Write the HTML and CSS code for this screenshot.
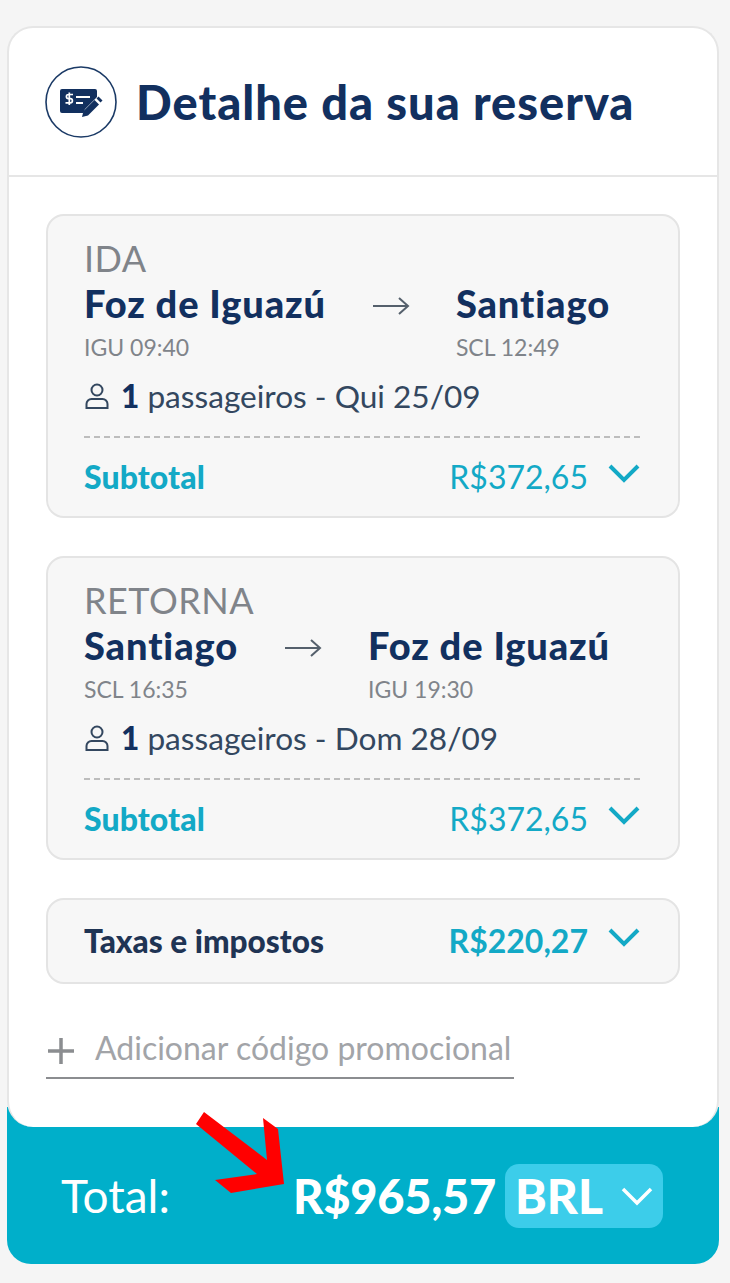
FILE: index.html
```html
<!DOCTYPE html>
<html lang="pt">
<head>
<meta charset="utf-8">
<title>Detalhe da sua reserva</title>
<link rel="stylesheet" href="styles.css">
</head>
<body>
<main class="booking">
  <div class="sheet">
    <header class="head">
      <span class="head-icon">
        <svg width="72" height="72" viewBox="0 0 72 72">
          <circle cx="36" cy="36" r="35" fill="none" stroke="#1b3a66" stroke-width="1.6"/>
          <path d="M15 25a2 2 0 0 1 2-2H50a2 2 0 0 1 2 2v6L40 43l-1.500 4H17a2 2 0 0 1-2-2z" fill="#12305f"/>
          <path d="M37 51l1.500-6 11-11 4.500 4.500-11 11z" fill="#12305f"/>
          <path d="M51.500 32.500l2-2 4 4-2 2z" fill="#12305f"/>
          <path d="M28 28.500h-4.500a2 2 0 0 0 0 4.200h1.800a2 2 0 0 1 0 4.200H20.500M24.300 26.500v12.500" fill="none" stroke="#fff" stroke-width="1.700"/>
          <path d="M31 31h14M31 37h7" fill="none" stroke="#fff" stroke-width="2"/>
        </svg>
      </span>
      <h1 class="title">Detalhe da sua reserva</h1>
    </header>
    <div class="body">
      <section class="leg">
        <div class="leg-kind">IDA</div>
        <div class="route">
          <div class="stop">
            <div class="city">Foz de Iguazú</div>
            <div class="code">IGU 09:40</div>
          </div>
          <svg class="arrow" width="38" height="22" viewBox="0 0 38 22"><path d="M1 11h35M27 3l9 8-9 8" fill="none" stroke="#55606c" stroke-width="2"/></svg>
          <div class="stop">
            <div class="city">Santiago</div>
            <div class="code">SCL 12:49</div>
          </div>
        </div>
        <div class="pax">
          <svg width="26" height="28" viewBox="0 0 26 28"><circle cx="13" cy="8" r="5.500" fill="none" stroke="#33475f" stroke-width="2"/><path d="M2.500 26v-4a5 5 0 0 1 5-5h11a5 5 0 0 1 5 5v4z" fill="none" stroke="#33475f" stroke-width="2"/></svg>
          <span><b class="pax-n">1</b> passageiros - Qui 25/09</span>
        </div>
        <div class="sub">
          <span class="sub-label">Subtotal</span>
          <span class="sub-price">R$372,65
            <svg class="chev" width="32" height="20" viewBox="0 0 32 20"><path d="M2 2l14 14L30 2" fill="none" stroke="#13a9c6" stroke-width="4"/></svg>
          </span>
        </div>
      </section>

      <section class="leg">
        <div class="leg-kind">RETORNA</div>
        <div class="route">
          <div class="stop">
            <div class="city">Santiago</div>
            <div class="code">SCL 16:35</div>
          </div>
          <svg class="arrow" width="38" height="22" viewBox="0 0 38 22"><path d="M1 11h35M27 3l9 8-9 8" fill="none" stroke="#55606c" stroke-width="2"/></svg>
          <div class="stop">
            <div class="city">Foz de Iguazú</div>
            <div class="code">IGU 19:30</div>
          </div>
        </div>
        <div class="pax">
          <svg width="26" height="28" viewBox="0 0 26 28"><circle cx="13" cy="8" r="5.500" fill="none" stroke="#33475f" stroke-width="2"/><path d="M2.500 26v-4a5 5 0 0 1 5-5h11a5 5 0 0 1 5 5v4z" fill="none" stroke="#33475f" stroke-width="2"/></svg>
          <span><b class="pax-n">1</b> passageiros - Dom 28/09</span>
        </div>
        <div class="sub">
          <span class="sub-label">Subtotal</span>
          <span class="sub-price">R$372,65
            <svg class="chev" width="32" height="20" viewBox="0 0 32 20"><path d="M2 2l14 14L30 2" fill="none" stroke="#13a9c6" stroke-width="4"/></svg>
          </span>
        </div>
      </section>

      <section class="tax">
        <span class="tax-label">Taxas e impostos</span>
        <span class="tax-price">R$220,27
          <svg class="chev" width="32" height="20" viewBox="0 0 32 20"><path d="M2 2l14 14L30 2" fill="none" stroke="#13a9c6" stroke-width="4"/></svg>
        </span>
      </section>

      <div class="promo">
        <svg width="30" height="30" viewBox="0 0 30 30"><path d="M15 2v26M2 15h26" fill="none" stroke="#8b8d90" stroke-width="3.500"/></svg>
        <span>Adicionar código promocional</span>
      </div>
    </div>
  </div>
  <footer class="total">
    <span class="total-label">Total:</span>
    <div class="total-right">
      <span class="total-value">R$965,57</span>
      <span class="currency">BRL
        <svg width="32" height="20" viewBox="0 0 32 20"><path d="M2 3l14 14L30 3" fill="none" stroke="#fff" stroke-width="3.500"/></svg>
      </span>
    </div>
  </footer>
  <svg class="pointer" width="92" height="84" viewBox="0 0 92 84"><path d="M1 14L9 2 72 50 68 8 83 19 89 74 36 83 20 70 62 64z" fill="#ff0000"/></svg>
</main>
</body>
</html>
```

FILE: styles.css
```css
* {
  box-sizing: border-box;
}

html, body {
  margin: 0;
  padding: 0;
}

body {
  background: #f5f5f5;
  font-family: "Lato", "Liberation Sans", sans-serif;
  color: #12305f;
  width: 730px;
  height: 1283px;
  overflow: hidden;
}

.booking {
  position: relative;
  width: 712px;
  margin: 26px 0 0 7px;
}

.sheet {
  position: relative;
  z-index: 1;
  background: #fff;
  border: 2px solid #e6e6e6;
  border-bottom: 0;
  border-radius: 26px;
  height: 1101px;
}

.head {
  display: flex;
  align-items: center;
  gap: 19px;
  height: 149px;
  padding: 0 0 0 36px;
  border-bottom: 2px solid #e6e6e6;
}

.head-icon {
  display: flex;
}

.title {
  margin: 0;
  font-size: 47px;
  font-weight: 900;
  letter-spacing: 1px;
  line-height: 54px;
  color: #12305f;
}

.body {
  padding: 37px 37px 0;
  display: flex;
  flex-direction: column;
  gap: 38px;
}

.leg {
  height: 304px;
  background: #f7f7f7;
  border: 2px solid #e4e4e4;
  border-radius: 18px;
  padding: 20px 38px 0 36px;
}

.leg-kind {
  font-size: 36px;
  letter-spacing: 0.5px;
  line-height: 44px;
  color: #80848a;
}

.route {
  display: flex;
  justify-content: space-between;
  align-items: flex-start;
  width: 526px;
}

.arrow {
  margin-top: 15px;
}

.stop {
  display: flex;
  flex-direction: column;
}

.city {
  font-size: 38px;
  font-weight: 900;
  letter-spacing: 0.9px;
  line-height: 46px;
  color: #12305f;
}

.code {
  font-size: 23px;
  line-height: 30px;
  margin-top: 6px;
  color: #80848a;
}

.pax {
  display: flex;
  align-items: center;
  gap: 11px;
  margin-top: 15px;
  font-size: 31.6px;
  line-height: 38px;
  color: #33475f;
}

.pax-n {
  font-weight: 900;
  color: #12305f;
}

.sub {
  display: flex;
  justify-content: space-between;
  align-items: center;
  margin-top: 21px;
  padding-top: 19px;
  border-top: 2px dashed #bdbdbd;
}

.sub-label {
  font-size: 32px;
  font-weight: 900;
  letter-spacing: 0.1px;
  line-height: 40px;
  color: #13a9c6;
}

.sub-price,
.tax-price {
  display: flex;
  align-items: center;
  gap: 20px;
  font-size: 32px;
  line-height: 40px;
  color: #13a9c6;
}

.tax-price {
  font-weight: 700;
}

.chev {
  margin-bottom: 6px;
}

.tax {
  display: flex;
  justify-content: space-between;
  align-items: center;
  height: 86px;
  background: #f7f7f7;
  border: 2px solid #e4e4e4;
  border-radius: 18px;
  padding: 0 38px 0 36px;
}

.tax-label {
  font-size: 31.6px;
  font-weight: 900;
  color: #1f3454;
}

.promo {
  display: flex;
  align-items: center;
  gap: 19px;
  width: 468px;
  height: 50px;
  margin-top: 7px;
  padding-bottom: 8px;
  border-bottom: 2px solid #8b8d90;
  font-size: 32px;
  color: #a2a4a8;
}

.promo svg {
  margin-top: 4px;
}

.promo span {
  margin-bottom: 4px;
}

.total {
  display: flex;
  justify-content: space-between;
  align-items: center;
  height: 157px;
  margin-top: -20px;
  padding: 20px 56px 0 54px;
  background: #00afca;
  border-radius: 0 0 24px 24px;
  color: #fff;
}

.total-label {
  font-size: 46px;
  color: #fff;
}

.total-right {
  display: flex;
  align-items: center;
  gap: 9px;
}

.total-value {
  font-size: 47px;
  font-weight: 900;
  letter-spacing: -0.3px;
  color: #fff;
}

.currency {
  display: flex;
  align-items: center;
  gap: 18px;
  height: 64px;
  padding: 0 10px;
  background: #3ccdea;
  border-radius: 14px;
  font-size: 48px;
  font-weight: 900;
  color: #fff;
}

.pointer {
  position: absolute;
  left: 188px;
  top: 1084px;
  z-index: 2;
}
```
